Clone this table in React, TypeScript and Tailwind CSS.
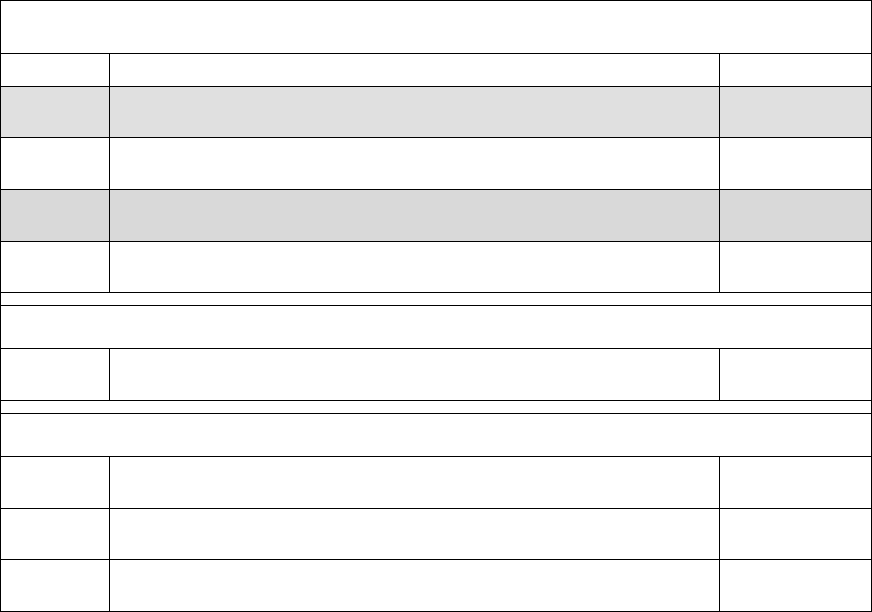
import React from "react";

type Row = { kind: "full" | "cols"; h: string; bg?: string };

const rows: Row[] = [
  { kind: "full", h: "h-[53px]" },
  { kind: "cols", h: "h-[33px]" },
  { kind: "cols", h: "h-[51px]", bg: "bg-[#e0e0e0]" },
  { kind: "cols", h: "h-[52px]" },
  { kind: "cols", h: "h-[52px]", bg: "bg-[#d9d9d9]" },
  { kind: "cols", h: "h-[51px]" },
  { kind: "full", h: "h-[13px]" },
  { kind: "full", h: "h-[43px]" },
  { kind: "cols", h: "h-[52px]" },
  { kind: "full", h: "h-[13px]" },
  { kind: "full", h: "h-[43px]" },
  { kind: "cols", h: "h-[52px]" },
  { kind: "cols", h: "h-[51px]" },
  { kind: "cols", h: "h-[52px]" },
];

export default function App() {
  return (
    <div
      className="w-[872px] h-[612px] bg-white"
      style={{ fontFamily: '"Liberation Sans", Arial, sans-serif' }}
    >
      <div className="flex flex-col border-l border-t border-black w-[872px]">
        {rows.map((r, i) =>
          r.kind === "full" ? (
            <div key={i} className={`${r.h} border-b border-r border-black ${r.bg ?? "bg-white"}`} />
          ) : (
            <div key={i} className={`${r.h} flex border-b border-black ${r.bg ?? "bg-white"}`}>
              <div className="w-[109px] shrink-0 border-r border-black" />
              <div className="w-[610px] shrink-0 border-r border-black" />
              <div className="w-[152px] shrink-0 border-r border-black" />
            </div>
          )
        )}
      </div>
    </div>
  );
}
